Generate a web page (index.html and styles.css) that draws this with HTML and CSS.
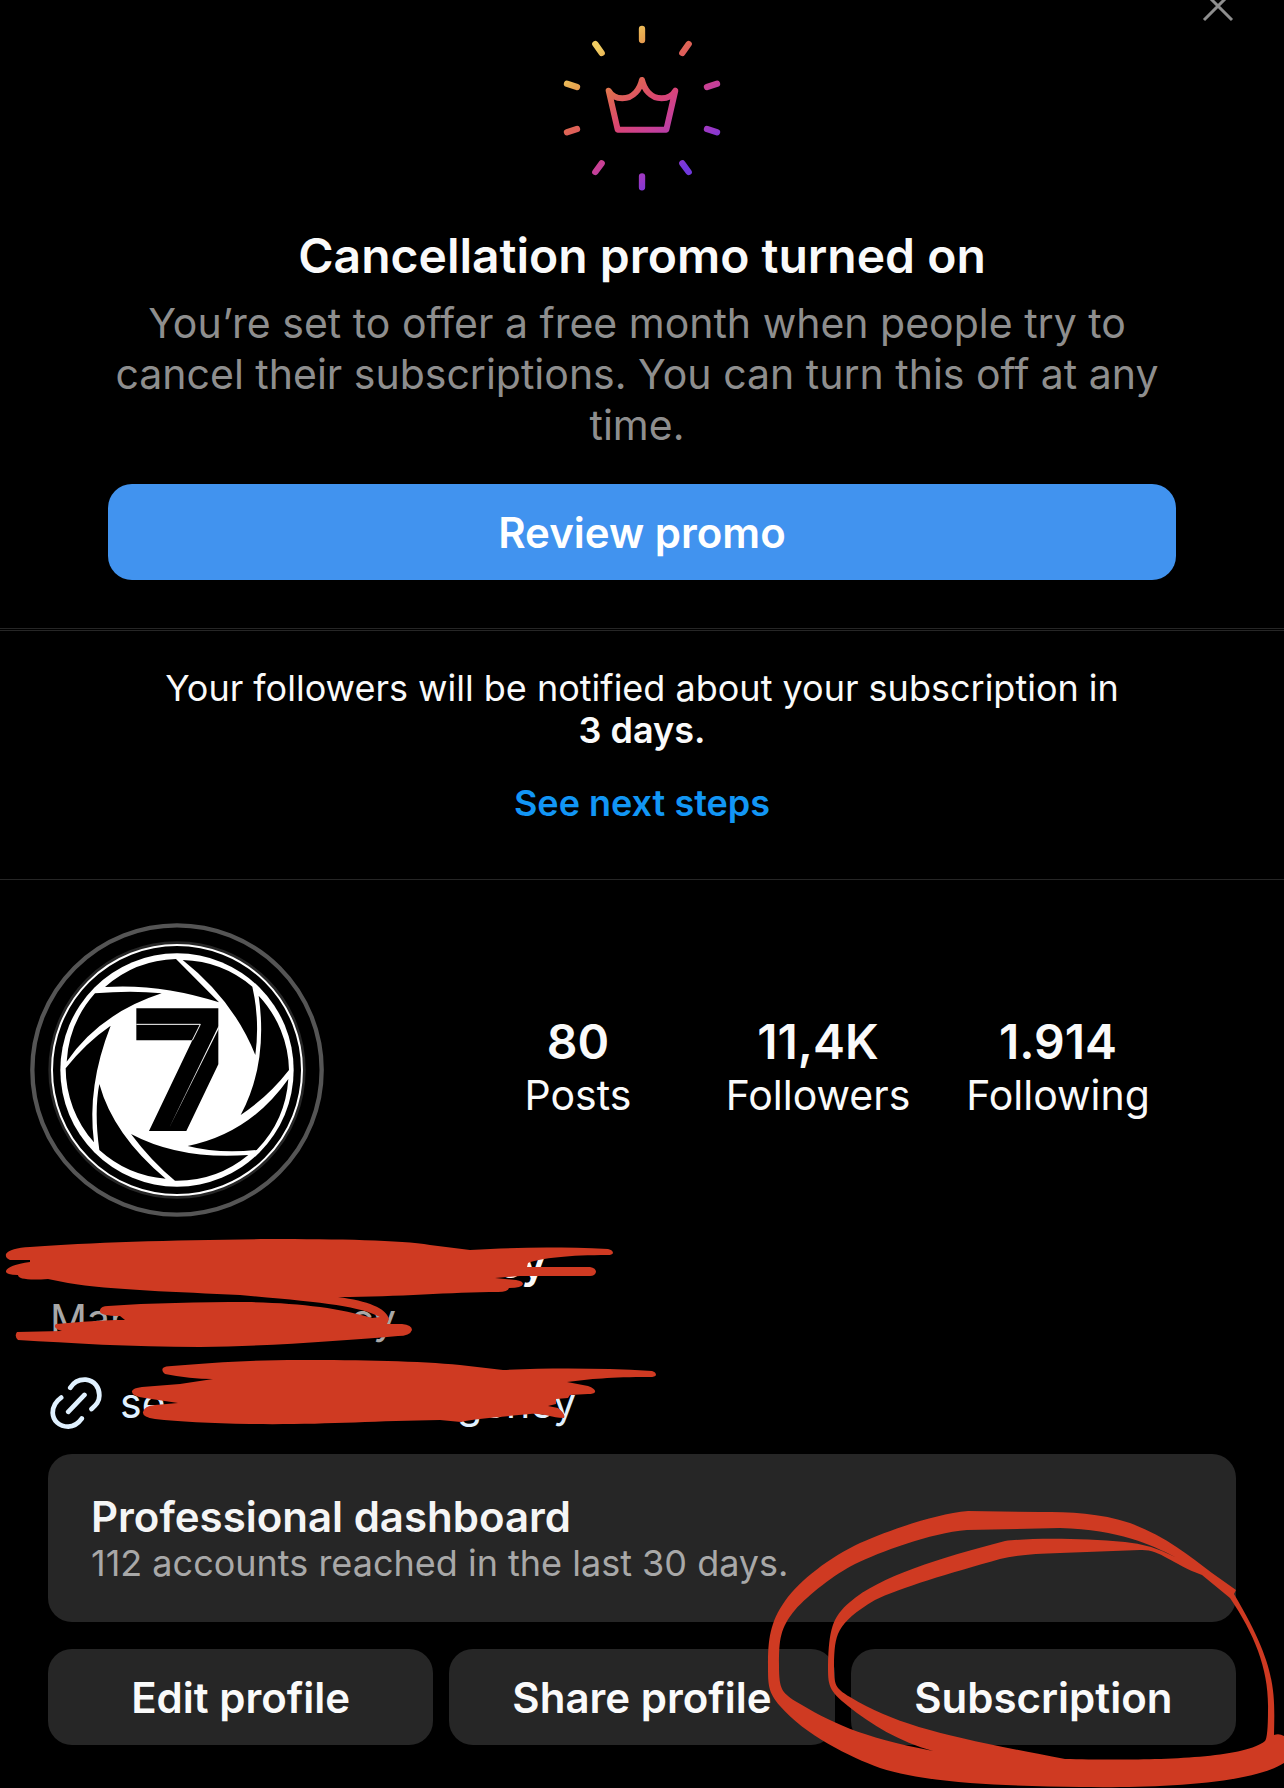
FILE: index.html
```html
<!DOCTYPE html>
<html lang="en">
<head>
  <meta charset="UTF-8" />
  <meta name="viewport" content="width=device-width, initial-scale=1.0" />
  <title>Profile</title>
  <link rel="stylesheet" href="styles.css">
</head>
<body>

  <section class="promo">
    <button class="close" type="button" aria-label="Close">
      <svg viewBox="0 0 32 32" width="32" height="32"><path d="M2 2L30 30M30 2L2 30" /></svg>
    </button>

    <svg class="crown" viewBox="6 0 600 600" aria-hidden="true">
      <defs>
        <linearGradient id="glow" gradientUnits="userSpaceOnUse" x1="176" y1="145" x2="437" y2="502">
          <stop offset="0" stop-color="#f0cc62" />
          <stop offset="0.1" stop-color="#e8aa50" />
          <stop offset="0.3" stop-color="#e06a50" />
          <stop offset="0.5" stop-color="#da4570" />
          <stop offset="0.65" stop-color="#c84096" />
          <stop offset="0.9" stop-color="#9838c8" />
          <stop offset="1" stop-color="#7038dc" />
        </linearGradient>
      </defs>
      <g fill="none" stroke="url(#glow)" stroke-linecap="round" stroke-linejoin="round">
        <path stroke-width="18" d="M206 272C214 286 228 295 247 295C281 295 300 267 306 240C312 267 331 295 365 295C384 295 398 286 406 272L379 389H233Z" />
        <path stroke-width="19" d="M306 87L306.1 120M446 132L427 159M531 251L501 261M501 387L531 397M427 490L446 516M306.1 529L306 562M185 490L166 516M111 387L81 397M81 251L111 261M166 132L185 159" />
      </g>
    </svg>

    <h1>Cancellation promo turned on</h1>
    <p>You’re set to offer a free month when people try to cancel their subscriptions. You can turn this off at any time.</p>
    <button class="review" type="button">Review promo</button>
  </section>

  <section class="notice">
    <p>Your followers will be notified about your subscription in <strong>3 days.</strong></p>
    <a href="#next">See next steps</a>
  </section>

  <section class="profile">
    <div class="top">
      <svg class="avatar" viewBox="30 39 882 882" role="img" aria-label="Profile picture">
        <circle cx="471" cy="480" r="434" fill="none" stroke="#555" stroke-width="13" />
        <circle cx="471" cy="480" r="381" fill="none" stroke="#262626" stroke-width="10" />
        <circle cx="471" cy="480" r="375" fill="none" stroke="#fff" stroke-width="6" />
        <circle cx="471" cy="480" r="350" fill="#fff" />
        <path d="M255 231A336 336 0 0 1 468 147L597 277Q420 220 255 231Z" />
        <path d="M488 150A336 336 0 0 1 697 230Q720 330 706 435Q640 270 488 150Z" />
        <path d="M716 257A336 336 0 0 1 807 480Q745 560 662 615Q745 460 716 257Z" />
        <path d="M805 507A336 336 0 0 1 710 720Q595 732 503 708Q690 670 805 507Z" />
        <path d="M685 735A336 336 0 0 1 465 812Q395 755 333 672Q480 750 685 735Z" />
        <path d="M437 806A336 336 0 0 1 238 720Q222 605 238 522Q280 675 437 806Z" />
        <path d="M222 697A336 336 0 0 1 137 475Q195 400 272 347Q200 530 222 697Z" />
        <path d="M140 455A336 336 0 0 1 225 250Q335 240 425 250Q240 310 140 455Z" />
        <path d="M349 295H595V463L499 663H387L517 391H349Z" />
        <path d="M349 343H541L517 391" fill="none" stroke="#fff" stroke-width="3" />
        <path d="M596 347V356L447 655Z" fill="#fff" />
      </svg>
      <ul class="stats">
        <li><b>80</b>Posts</li>
        <li><b>11,4K</b>Followers</li>
        <li><b>1.914</b>Following</li>
      </ul>
    </div>

    <div class="bio">
      <p class="name">ncy</p>
      <p class="category"><span>Mar</span><span>cy</span></p>
      <a class="site" href="#site">
        <svg viewBox="148 468 154 154" width="52" height="52" aria-hidden="true">
          <path d="M208 500C219 482 236 475 254 476C280 479 295 499 294 524C294 541 285 550 271 563M181 529C164 541 156 553 156 574C157 597 175 615 202 615C220 614 232 605 242 591M202 571L250 521" />
        </svg>
        <span>se</span><span>gency</span>
      </a>
    </div>

    <a class="dashboard" href="#dashboard">
      <b>Professional dashboard</b>
      <span>112 accounts reached in the last 30 days.</span>
    </a>

    <div class="actions">
      <button type="button">Edit profile</button>
      <button type="button">Share profile</button>
      <button type="button">Subscription</button>
    </div>

    <!-- marker strokes over the name, category, link and Subscription button -->
    <svg class="marker" viewBox="0 880 1284 908" aria-hidden="true">
      <path d="M30 1260H10Q5 1258 6 1254Q10 1248 30 1247C90 1242 180 1240 267 1239C340 1239 400 1240 430 1245L470 1250C520 1247 560 1247 608 1249Q613 1250 613 1253Q612 1255 608 1255C570 1255 540 1258 528 1263L527 1267H590Q596 1268 596 1272Q595 1276 590 1276H520L495 1278L516 1280Q523 1281 523 1284Q522 1288 509 1288Q508 1292 498 1292C450 1292 400 1297 338 1297C368 1301 386 1308 389 1319L387 1324L402 1324Q412 1325 412 1330Q410 1336 398 1336C340 1341 270 1346 200 1347C130 1347 70 1343 18 1340Q14 1336 17 1332L62 1331Q52 1328 56 1324C80 1322 105 1320 125 1320L120 1316Q98 1316 100 1310Q101 1306 108 1306C150 1303 200 1302 247 1302C300 1303 340 1308 372 1318L380 1317C360 1306 320 1302 240 1295C180 1292 110 1290 68 1283L48 1279Q18 1281 18 1275Q5 1275 6 1271Q8 1265 30 1262Z" />
      <path d="M165 1374Q161 1371 163 1368Q165 1366 172 1366C210 1363 250 1360 300 1360C360 1360 420 1361 460 1365L503 1370C550 1368 600 1368 652 1371Q656 1372 656 1375Q655 1377 650 1377C610 1377 590 1379 567 1382L588 1386Q596 1389 595 1392Q594 1394 588 1394L570 1395L568 1398L556 1399V1404L548 1406L558 1408Q566 1414 564 1418C550 1418 545 1413 530 1414C500 1417 470 1419 461 1422L440 1420C370 1421 320 1425 250 1424Q190 1423 155 1419Q142 1417 143 1412Q144 1406 155 1405L178 1403L145 1398Q131 1396 132 1391Q133 1388 142 1387L180 1384L213 1379Q190 1379 165 1374Z" />
      <path fill-rule="evenodd" d="M1236 1590L1212 1573C1190 1556 1165 1536 1130 1523C1100 1513 1070 1512 1040 1512L968 1511C935 1514 890 1530 860 1543C830 1557 800 1580 785 1601C770 1622 768 1640 768 1665C768 1685 768 1692 780 1706C805 1735 850 1757 880 1768C930 1784 1010 1786 1080 1787C1150 1788 1250 1785 1284 1763V1736Q1279 1733 1274 1735C1275 1690 1276 1665 1234 1594Z
        M1175 1557C1150 1544 1120 1530 1060 1528L967 1530C930 1533 880 1552 855 1564C835 1574 808 1595 795 1610C780 1628 779 1640 779 1665C779 1690 782 1692 795 1701C830 1722 860 1737 933 1751C900 1742 870 1724 848 1706C828 1690 828 1685 828 1665C829 1630 832 1617 850 1602C880 1576 940 1558 1005 1541C1030 1538 1080 1538 1125 1542Q1150 1544 1175 1557Z
        M1140 1550L1060 1553Q1020 1554 1000 1559C950 1573 900 1588 875 1600C835 1624 835 1635 834 1665C834 1685 835 1688 850 1697C900 1727 950 1737 1065 1759C1120 1760 1240 1762 1265 1741Q1268 1737 1268 1710C1269 1670 1255 1635 1230 1598L1202 1575C1170 1563 1160 1549 1140 1550Z" />
    </svg>
  </section>

</body>
</html>
```

FILE: styles.css
```css
* {
  box-sizing: border-box;
}

body {
  margin: 0;
  background: #000;
  color: #fafafa;
  font-family: Inter, "Liberation Sans", sans-serif;
  font-size: 41px;
  line-height: 51px;
}

h1, p, ul {
  margin: 0;
  padding: 0;
}

button {
  border: 0;
  border-radius: 24px;
  height: 96px;
  padding: 0;
  font: inherit;
  font-size: 42px;
  font-weight: 600;
  color: #fff;
}

a {
  text-decoration: none;
}

b, strong {
  font-weight: 600;
}

/* promo */
.promo {
  position: relative;
  display: flex;
  flex-direction: column;
  align-items: center;
  padding: 0 108px 48px;
  text-align: center;
}

.close {
  position: absolute;
  top: -10px;
  right: 50px;
  width: 32px;
  height: 32px;
  background: none;
}

.close svg {
  display: block;
  fill: none;
  stroke: #8e8e8e;
  stroke-width: 3;
}

.crown {
  width: 200px;
  height: 200px;
}

.promo h1 {
  margin-top: 26px;
  font-size: 48px;
  font-weight: 600;
  line-height: 60px;
}

.promo p {
  margin-top: 12px;
  padding-right: 10px;
  color: #8e8e8e;
}

.review {
  width: 100%;
  margin-top: 33px;
  background: #4193ef;
}

/* notice */
.notice {
  display: flex;
  flex-direction: column;
  align-items: center;
  gap: 31px;
  padding: 36px 160px 55px;
  border-top: 3px double #262626;
  border-bottom: 1px solid #262626;
  font-size: 36px;
  line-height: 42px;
  text-align: center;
}

.notice strong {
  white-space: nowrap;
}

.notice a {
  color: #1296f5;
  font-weight: 600;
}

/* profile */
.profile {
  position: relative;
  padding: 43px 48px;
}

.top {
  display: flex;
  align-items: center;
  justify-content: space-between;
  padding-right: 58px;
}

.avatar {
  width: 294px;
  height: 294px;
  margin-left: -18px;
}

.stats {
  display: grid;
  grid-template-columns: repeat(3, 240px);
  margin-bottom: 6px;
  list-style: none;
  text-align: center;
}

.stats b {
  display: block;
  font-size: 48px;
  line-height: 56px;
}

.bio {
  padding: 20px 2px 0;
}

.name {
  width: 496px;
  text-align: right;
  font-size: 42px;
  font-weight: 600;
}

.category {
  display: flex;
  justify-content: space-between;
  width: 346px;
  margin-top: 6px;
  color: #a8a8a8;
}

.site {
  display: flex;
  align-items: center;
  width: 526px;
  margin-top: 32px;
  color: #e0f1ff;
}

.site svg {
  margin-right: 18px;
  fill: none;
  stroke: #e0f1ff;
  stroke-width: 14;
  stroke-linecap: round;
}

.site span:last-child {
  margin-left: auto;
}

.dashboard {
  display: block;
  margin-top: 25px;
  padding: 37px 43px 38px;
  border-radius: 24px;
  background: #262626;
  color: #f5f5f5;
}

.dashboard b {
  display: block;
  font-size: 42px;
}

.dashboard span {
  display: block;
  color: #a8a8a8;
  font-size: 36px;
  line-height: 42px;
}

.actions {
  display: grid;
  grid-template-columns: repeat(3, 1fr);
  gap: 16px;
  margin-top: 27px;
}

.actions button {
  background: #262626;
  color: #fafafa;
}

.marker {
  position: absolute;
  top: 0;
  left: 0;
  width: 100%;
  fill: #cf3a22;
  pointer-events: none;
}
```
